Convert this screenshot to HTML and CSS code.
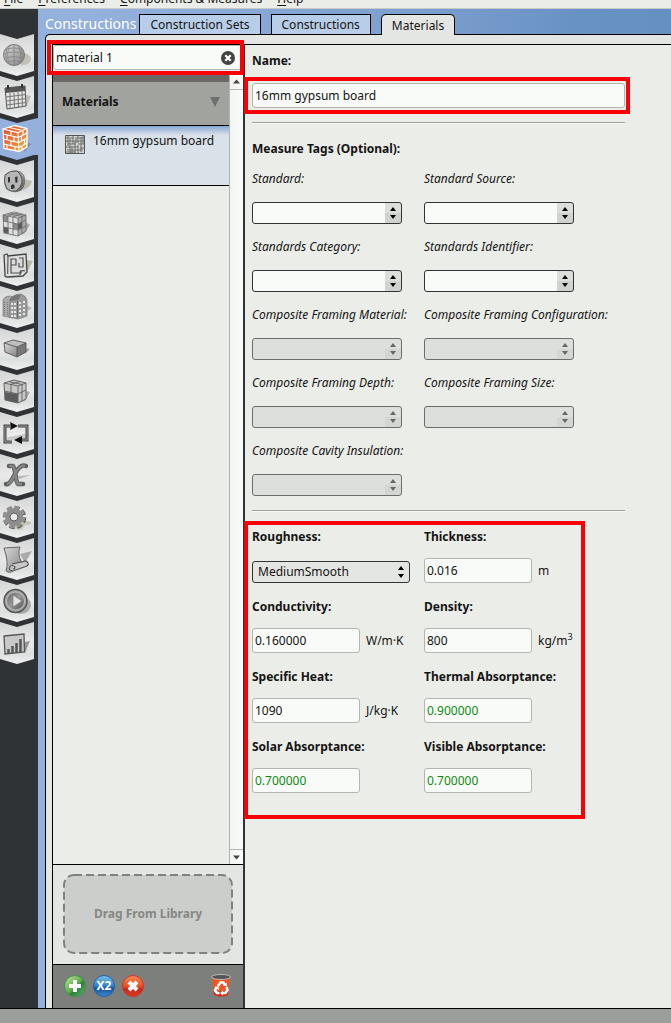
FILE: index.html
```html
<!DOCTYPE html>
<html lang="en">
<head>
<meta charset="utf-8">
<title>Constructions - Materials</title>
<link rel="stylesheet" href="styles.css">
</head>
<body>
<svg class="defs" aria-hidden="true">
  <defs>
    <linearGradient id="plate" x1="0" y1="0" x2="0" y2="1"><stop offset="0" stop-color="#d4d6d5"/><stop offset=".5" stop-color="#e8e9e8"/><stop offset=".75" stop-color="#dcdfdf"/><stop offset="1" stop-color="#f0f1f0"/></linearGradient>
    <linearGradient id="metal" x1="0" y1="0" x2="1" y2="1"><stop offset="0" stop-color="#d8d8d7"/><stop offset="1" stop-color="#858585"/></linearGradient>
    <linearGradient id="dark" x1="0" y1="0" x2="1" y2="1"><stop offset="0" stop-color="#666"/><stop offset=".5" stop-color="#999"/><stop offset="1" stop-color="#4c4c4c"/></linearGradient>
    <linearGradient id="brick" x1="0" y1="0" x2="1" y2="1"><stop offset="0" stop-color="#d9512c"/><stop offset=".55" stop-color="#ee7b39"/><stop offset="1" stop-color="#f8b52c"/></linearGradient>
    <linearGradient id="green" x1="0" y1="0" x2="1" y2="1"><stop offset="0" stop-color="#c9e5a5"/><stop offset=".5" stop-color="#62ad4c"/><stop offset=".6" stop-color="#2e7d3c"/><stop offset="1" stop-color="#5cc46a"/></linearGradient>
    <linearGradient id="blue" x1="0" y1="0" x2="0" y2="1"><stop offset="0" stop-color="#7fc0ea"/><stop offset=".5" stop-color="#2f83c8"/><stop offset=".6" stop-color="#174f95"/><stop offset="1" stop-color="#3d8cd0"/></linearGradient>
    <linearGradient id="red" x1="0" y1="0" x2="0" y2="1"><stop offset="0" stop-color="#f58b58"/><stop offset=".5" stop-color="#ea5225"/><stop offset=".65" stop-color="#c8261c"/><stop offset="1" stop-color="#df3c24"/></linearGradient>
    <path id="tab" d="M0 0 17 5 34 0V37L17 42 0 37Z" fill="url(#plate)"/>
  </defs>
</svg>

<nav class="menubar" aria-label="Menu">
  <button><u>F</u>ile</button>
  <button><u>P</u>references</button>
  <button><u>C</u>omponents &amp; Measures</button>
  <button><u>H</u>elp</button>
</nav>

<div class="workspace">
  <nav class="rail" aria-label="Sections">
    <button aria-label="Site"><svg viewBox="0 0 38 42"><use href="#tab"/><ellipse cx="23" cy="25" rx="8" ry="6" fill="#c3c1b5"/><circle cx="14" cy="21" r="10.5" fill="url(#metal)" stroke="#787878"/><path d="M5 16q9-4 18 0M4 20q10-4 20 0M4 24q10-3 20 0M6 28q8-3 16 0M14 10.500v21M10 11q-5 10 0 20M18 11q5 10 0 20M7 14q-3 7 0 14M21 14q3 7 0 14" fill="none" stroke="#808080" stroke-width=".7"/></svg></button>
    <button aria-label="Schedules"><svg viewBox="0 0 38 42"><use href="#tab"/><path d="m26 19 5 1-4 10-18 3z" fill="#bdbdb7"/><path d="M5 12 25 10 26 30 7 33Z" fill="#e3e3e2" stroke="#555"/><path d="m5 12 20-2 .3 5L5.300 17z" fill="#555"/><path d="M8 9v4M22 8v4" stroke="#333" stroke-width="2"/><path d="M6 21 25.500 18.500M6.500 25 26 22.500M6.500 29 26 26.500M10 17v15.500M14 16.500 14.500 32M18 16 18.500 31.500M22 15.500 22.500 31" stroke="#777"/></svg></button>
    <button aria-label="Constructions" aria-current="page"><svg viewBox="0 0 38 42"><path d="M0 0 17 5 38 0V37L34 37 17 42 0 37Z" fill="#94b0dc"/><path d="m26 24 5 2-7 8z" fill="#6e86ad"/><path d="m3 11 12-3.500 12 3V29l-8 4.500-15-3z" fill="url(#brick)" stroke="#fff" stroke-width="1.300"/><path d="m3 11 15 3.500 9-4M18 14.500 19 33M3.300 16l15 3.500 8.700-4.500M3.600 21l15 3.500 8.400-4.500M4 26l15 3.500 8-4.500M9 9.500l14 3M11 13v5M7 17v5M14 18.500v5M11 23v5M7 27v4M15 29v4M23 12v5M21.500 18v5M24.500 21v5M22 27.500v4" fill="none" stroke="#fff" stroke-width="1.200"/></svg></button>
    <button aria-label="Loads"><svg viewBox="0 0 38 42"><use href="#tab"/><path d="m24 19 8 2q-1 8-15 11z" fill="#bdbab0"/><path d="M6 14q5-5 14-3 6 3 5 12-1 7-8 9-6 1-11-3-4-8 0-15Z" fill="url(#dark)"/><path d="M5 15q5-5 12-4 5 4 5 11-1 6-6 9-5 1-9-2-4-7-2-14Z" fill="#b6b6b5" stroke="#555"/><path d="m8 17 2 .3v5l-2 .2zM15 17l2.500-.5v6l-2 .3z" fill="#333"/><path d="M11 29v-3q1.500-3 3.500-.5v3z" fill="#333"/></svg></button>
    <button aria-label="Space Types"><svg viewBox="0 0 38 42"><use href="#tab"/><path d="m26 20 4 3-6 9-6 1z" fill="#aaa"/><path d="m3 13 11-3 12 3v16l-8 5-14-3z" fill="#dedede"/><path d="m3 13 5 1v6l-5-1zM13 21l5 1v5.500l-5-1z" fill="#8b8b8b"/><path d="m18 16 8-3v16l-8 5z" fill="#a9a9a9"/><path d="m18 22 4-2v5.500L18 28zM3.500 25l5 1v5.500l-5-1z" fill="#5b5b5b"/><path d="m3 13 11-3 12 3v16l-8 5-14-3zM3 13l15 3 8-3M18 16v18M3 19l15 3 8-4M3.500 25l14.500 3 8-4M8 14v17.500M13 15v18M22 14.500V31.500M7 12l15 2.500M10 11l14 2.500M8 14l10-3M13 15l9-3" fill="none" stroke="#666" stroke-width=".8"/></svg></button>
    <button aria-label="Geometry"><svg viewBox="0 0 38 42"><use href="#tab"/><path d="m27 16 6 1-5 9-5 5z" fill="#bbb8aa"/><path d="m4 11 3-1 1 2 18-2 1 18-4 4-15 1q-4 0-3-3z" fill="#dcdddb" stroke="#444" stroke-width="1.300"/><path d="m8 12-.3 18" stroke="#444"/><path d="M16 15h-5v14h10v-3M16 15v6h-5M19 14h4v9h-4v-4M20 31v-3q2-2 5-1" fill="none" stroke="#505050" stroke-width="1.200"/></svg></button>
    <button aria-label="Facility"><svg viewBox="0 0 38 42"><use href="#tab"/><path d="m26 19 6 3-7 5z" fill="#b9b9b7"/><path d="M3 15q0-5 8-5l2 2v20l-10-2z" fill="#aaa" stroke="#777" stroke-width=".7"/><path d="M10 13q4-5 11-5 5 2 6 6v16l-9 3-9-2z" fill="#999" stroke="#777" stroke-width=".7"/><path d="M10 13q4-5 11-4l-3 5-8 1z" fill="#777"/><path d="M12 17v14M15 17v15M20 16v15M24 15v15" stroke="#f0f0f0" stroke-width="1.800" stroke-dasharray="2 2"/><path d="M4.500 16v13M7.500 16v14" stroke="#777" stroke-dasharray="1 1"/><path d="M17.500 15v17" stroke="#666"/></svg></button>
    <button aria-label="Spaces"><svg viewBox="0 0 38 42"><use href="#tab"/><path d="m25 20 5 1-5 5z" fill="#a8a8a8"/><path d="m4 15 9-3 13 3-9 4z" fill="#bfbfbf"/><path d="m4 15 13 4v10L5 24z" fill="url(#metal)"/><path d="m17 19 9-4v9l-9 5z" fill="#787878"/><path d="m4 15 9-3 13 3v9l-9 5-12-5zM4 15l13 4v10M17 19l9-4" fill="none" stroke="#555" stroke-width=".9"/></svg></button>
    <button aria-label="Thermal Zones"><svg viewBox="0 0 38 42"><use href="#tab"/><path d="m26 21 4 1-5 9-6 1z" fill="#aaa"/><path d="m4 13 10-3 12 3v16l-8 4-13-3z" fill="#c8c8c7" stroke="#666"/><path d="m5 22 13 2v9L5 30z" fill="#5c5c5c"/><path d="m4 13 14 3 8-3M18 16v17M11 14.500v17M4.500 21l13.500 3 8-4M22 14v17M9 11.500l13 3M10 14.500l10-3" fill="none" stroke="#606060" stroke-width=".9"/></svg></button>
    <button aria-label="HVAC Systems"><svg viewBox="0 0 38 42"><use href="#tab"/><path d="M7 28q0-7 23-6l-4 5z" fill="#c8c8c6"/><path d="m8 24 16-3" stroke="#eee" stroke-width="2"/><path d="M11 14H5v16h7M18 14h9v14h-7" fill="none" stroke="#454545" stroke-width="3"/><path d="M11 14H5v16h7M18 14h9v14h-7" fill="none" stroke="#999"/><path d="m10 10 8 4-8 4 1-4zM22 24v8l-8-4z" fill="#111"/></svg></button>
    <button aria-label="Output Variables"><svg viewBox="0 0 38 42"><use href="#tab"/><path d="m18 22 13-1-12 4z" fill="#b8b8b6"/><path d="M9 12h4c3 3 2 15 5 18h5M26 12c-5-2-8 2-11 8s-6 11-9 10" fill="none" stroke="#5c5c5c" stroke-width="4.500" stroke-linecap="round" stroke-linejoin="round"/><path d="M9 12h4c3 3 2 15 5 18h4M25 12c-4-1-7 2-10 8s-5 10-8 10" fill="none" stroke="#858585" stroke-width="2.500"/></svg></button>
    <button aria-label="Simulation Settings"><svg viewBox="0 0 38 42"><use href="#tab"/><path d="m22 24 9 2q1 3-6 3l-4 5-10-2z" fill="#c3c0b4"/><circle cx="14.500" cy="21.500" r="9.500" fill="none" stroke="#555" stroke-width="4.500" stroke-dasharray="4.600 2.860"/><circle cx="14" cy="21" r="9.500" fill="none" stroke="#929292" stroke-width="3.500" stroke-dasharray="4.600 2.860"/><circle cx="14" cy="21" r="6.500" fill="none" stroke="#8e8e8e" stroke-width="5"/><circle cx="14" cy="21" r="4" fill="#e9e9e8" stroke="#5c5c5c"/></svg></button>
    <button aria-label="Measures"><svg viewBox="0 0 38 42"><use href="#tab"/><path d="m20 16 12-3-7 12z" fill="#aaa"/><path d="m4 10 16-1q-3 7 2 16l-8 7q-4 4-8 1Q9 25 4 10Z" fill="url(#metal)" stroke="#666"/><path d="m12 26 14-3q4 3 1 5l-14 5q-5-1-3-4 2-3 5 0 0 2-2 2" fill="#c9c9c9" stroke="#555" stroke-width="1.200"/></svg></button>
    <button aria-label="Run Simulation"><svg viewBox="0 0 38 42"><use href="#tab"/><ellipse cx="21" cy="25" rx="10" ry="9" fill="#aaa"/><circle cx="15.500" cy="21" r="11.500" fill="#a1a1a1" stroke="#555" stroke-width="1.500"/><circle cx="15.500" cy="21" r="9" fill="url(#dark)" stroke="#bcbcbc"/><path d="m13 15 9 6-9 6z" fill="#e3e3e3" stroke="#777" stroke-width=".7"/></svg></button>
    <button aria-label="Results Summary"><svg viewBox="0 0 38 42"><use href="#tab"/><path d="m25 20 5-1-5 12z" fill="#999"/><path d="m4 14 20-2 .5 18L5 32z" fill="#c9c9c9" stroke="#555" stroke-width="1.300"/><path d="M8.500 31v-4M12.500 31v-7M16.500 30.500V21M20.500 30V17" stroke="#555" stroke-width="2.500"/></svg></button>
  </nav>

  <main class="main">
    <header class="tabbar">
      <h1>Constructions</h1>
      <button class="tab">Construction Sets</button>
      <button class="tab">Constructions</button>
      <button class="tab tab-active">Materials</button>
    </header>

    <div class="frame">
      <div class="panes">
        <aside class="library">
          <div class="search marked">
            <input type="text" value="material 1" aria-label="Search materials">
            <button aria-label="Clear search"><svg viewBox="0 0 14 14"><circle cx="7" cy="7" r="7" fill="#444"/><path d="m4.300 4.300 5.400 5.400M9.700 4.300 4.300 9.700" stroke="#fff" stroke-width="2.200"/></svg></button>
          </div>
          <div class="list">
            <div class="list-body">
              <button class="group">Materials <svg viewBox="0 0 10 10"><path d="M0 0h10L5 10z" fill="#6e706d"/></svg></button>
              <button class="item">
                <svg viewBox="0 0 20 20"><path d="M.5.500h19v18H.500z" fill="#d2d4d2" stroke="#555"/><path d="M1 3h8M12 3h7M1 6h18M3 9h8M13 9h6M1 12h12M15 13h4M2 15h16M1 17h10M3 1v10M5 4v14M8 1v8M10 6v12M13 1v7M13 10v8M16 2v15M18 1v8M7 11v7M11 2v6" stroke="#6d706d" stroke-width="1"/></svg>
                <span>16mm gypsum board</span>
              </button>
            </div>
            <div class="scroll" aria-hidden="true">
              <svg viewBox="0 0 13 14"><path d="M3 8.500 6.500 4.500 10 8.500z" fill="#444"/></svg>
              <svg viewBox="0 0 13 14"><path d="M3 5.500 6.500 9.500 10 5.500z" fill="#444"/></svg>
            </div>
          </div>
          <div class="drop"><div class="drop-box"><svg><rect/></svg><span>Drag From Library</span></div></div>
          <div class="actions">
            <button aria-label="Add"><svg viewBox="0 0 22 22"><circle cx="11" cy="11" r="10.500" fill="url(#green)" stroke="#3e9546"/><path d="M11 5v12M5 11h12" stroke="#fff" stroke-width="4"/></svg></button>
            <button aria-label="Duplicate"><svg viewBox="0 0 22 22"><circle cx="11" cy="11" r="10.500" fill="url(#blue)" stroke="#2261a8"/><text x="11" y="15" text-anchor="middle">X2</text></svg></button>
            <button aria-label="Remove"><svg viewBox="0 0 22 22"><circle cx="11" cy="11" r="10.500" fill="url(#red)" stroke="#c73a22"/><path d="m7 7 8 8M15 7l-8 8" stroke="#fff" stroke-width="4"/></svg></button>
            <button class="purge" aria-label="Purge unused"><svg viewBox="0 0 22 24"><path d="M2 3h18l-2 18q-7 3-14 0z" fill="#ef5423"/><path d="M3.500 17h15l-.5 4q-7 3-14 0z" fill="#c7301d"/><ellipse cx="11" cy="3" rx="9.500" ry="2.500" fill="#555" stroke="#bbb"/><path d="m8 12 2.500-3.500h3L15 11M16.500 13l1 3-2 3H12M9.500 19H7l-2-2.500L6.500 13" fill="none" stroke="#fff" stroke-width="2.500"/><path d="m16.500 8.500.5 4-4-1zM13 16.500v5L10 19zM4.500 13l4-1 .5 4z" fill="#fff"/></svg></button>
          </div>
        </aside>

        <form class="editor">
          <label class="strong" for="name">Name:</label>
          <div class="name marked"><input id="name" type="text" value="16mm gypsum board"></div>
          <hr>
          <h2 class="strong">Measure Tags (Optional):</h2>
          <div class="grid tags">
            <div class="field"><label for="t1">Standard:</label><select id="t1"><option></option></select></div>
            <div class="field"><label for="t2">Standard Source:</label><select id="t2"><option></option></select></div>
            <div class="field"><label for="t3">Standards Category:</label><select id="t3"><option></option></select></div>
            <div class="field"><label for="t4">Standards Identifier:</label><select id="t4"><option></option></select></div>
            <div class="field"><label for="t5">Composite Framing Material:</label><select id="t5" disabled><option></option></select></div>
            <div class="field"><label for="t6">Composite Framing Configuration:</label><select id="t6" disabled><option></option></select></div>
            <div class="field"><label for="t7">Composite Framing Depth:</label><select id="t7" disabled><option></option></select></div>
            <div class="field"><label for="t8">Composite Framing Size:</label><select id="t8" disabled><option></option></select></div>
            <div class="field"><label for="t9">Composite Cavity Insulation:</label><select id="t9" disabled><option></option></select></div>
          </div>
          <hr>
          <div class="grid props marked">
            <div class="field"><label for="p1">Roughness:</label><select id="p1" class="filled"><option>MediumSmooth</option></select></div>
            <div class="field"><label for="p2">Thickness:</label><div class="value"><input id="p2" type="text" value="0.016"><span>m</span></div></div>
            <div class="field"><label for="p3">Conductivity:</label><div class="value"><input id="p3" type="text" value="0.160000"><span>W/m·K</span></div></div>
            <div class="field"><label for="p4">Density:</label><div class="value"><input id="p4" type="text" value="800"><span>kg/m<sup>3</sup></span></div></div>
            <div class="field"><label for="p5">Specific Heat:</label><div class="value"><input id="p5" type="text" value="1090"><span>J/kg·K</span></div></div>
            <div class="field"><label for="p6">Thermal Absorptance:</label><div class="value"><input id="p6" class="default" type="text" value="0.900000"></div></div>
            <div class="field"><label for="p7">Solar Absorptance:</label><div class="value"><input id="p7" class="default" type="text" value="0.700000"></div></div>
            <div class="field"><label for="p8">Visible Absorptance:</label><div class="value"><input id="p8" class="default" type="text" value="0.700000"></div></div>
          </div>
        </form>
      </div>
    </div>
  </main>
</div>
<footer class="statusbar"></footer>
</body>
</html>
```
FILE: styles.css
```css
*, *::after { box-sizing: border-box; }

body {
  margin: 0;
  min-height: 100vh;
  display: flex;
  flex-direction: column;
  background: #ebede8;
  color: #141414;
  font: 12px/18px "Noto Sans", sans-serif;
}

button, input, select { font: inherit; color: inherit; }
button { padding: 0; border: 0; background: none; }
svg { display: block; }
.defs { position: absolute; width: 0; height: 0; }

.menubar {
  display: flex;
  align-items: flex-end;
  gap: 15px;
  height: 9px;
  padding-left: 4px;
  overflow: hidden;
  border-bottom: 1px solid #c8cac7;
}
.menubar button { flex: none; height: 18px; line-height: 18px; }
.menubar u { text-underline-offset: 2px; }

.workspace { flex: 1; display: flex; }

.rail {
  flex: none;
  width: 38px;
  padding-top: 25px;
  background: #2f3336;
}
.rail button { display: block; width: 100%; }
.rail svg { width: 100%; overflow: visible; }

.main {
  flex: 1;
  min-width: 0;
  display: flex;
  flex-direction: column;
  padding-left: 7px;
  background: linear-gradient(90deg, #94b0dc 0, #94b0dc 60px, #7b9fcf 60%, #6992c4 85%, #6790c2);
}

.tabbar { display: flex; align-items: flex-end; height: 25px; }
.tabbar h1 {
  margin: 0 3px 0 0;
  color: #fff;
  font-size: 14px;
  font-weight: 400;
  line-height: 20px;
}
.tab {
  height: 20px;
  margin-right: 10px;
  padding: 0 10px;
  border: 1px solid #000;
  border-bottom: 0;
  background: #b8cee8;
  font-size: 12px;
  line-height: 20px;
}
.tab-active {
  z-index: 1;
  height: 21px;
  margin-bottom: -1px;
  border-radius: 5px 5px 0 0;
  background: #e4e6e3;
  line-height: 22px;
}

.frame {
  flex: 1;
  display: flex;
  padding: 9px 0 0 6px;
  border: solid #000;
  border-width: 1px 0 0 1px;
  border-radius: 5px 0 0 0;
  background: #e4e6e3;
}
.panes {
  flex: 1;
  min-width: 0;
  display: flex;
  border: solid #000;
  border-width: 1px 0 0 1px;
  background: #ebede8;
}

.marked { position: relative; }
.marked::after {
  content: "";
  position: absolute;
  border: 4px solid #fb0007;
  pointer-events: none;
}

.library {
  flex: none;
  display: flex;
  flex-direction: column;
  width: 192px;
  border-right: 2px solid #2f3336;
}
.search { display: flex; align-items: center; height: 30px; padding-bottom: 5px; }
.search::after { inset: -5px -1px 0 -6px; }
.search input {
  width: 100%;
  height: 25px;
  padding: 0 24px 0 2px;
  border: 1px solid #b4b6b3;
  border-radius: 3px;
  background: #f9fbf8;
}
.search button { width: 14px; margin-left: -22px; }

.list { flex: 1; display: flex; }
.list-body { flex: 1; border-top: 7px solid #6b6766; }
.group {
  display: flex;
  align-items: center;
  justify-content: space-between;
  width: 100%;
  height: 44px;
  padding: 0 9px;
  padding-bottom: 4px;
  border-bottom: 1px solid #000;
  background: #a1a39f;
  font-weight: 700;
}
.group svg { width: 10px; }
.item {
  display: flex;
  align-items: flex-start;
  gap: 8px;
  width: 100%;
  height: 60px;
  padding: 6px 12px;
  border-bottom: 1px solid #000;
  background: linear-gradient(#87a6d3, #d9e1e9 9px);
}
.item svg { width: 20px; margin-top: 3px; }
.scroll {
  display: flex;
  flex-direction: column;
  justify-content: space-between;
  width: 14px;
  border-left: 1px solid #b4b6b3;
  background: linear-gradient(90deg, #f3f5f2, #fbfcfa);
}
.scroll svg:first-child { border-bottom: 1px solid #b4b6b3; }
.scroll svg:last-child { border-top: 1px solid #b4b6b3; }

.drop { padding: 9px 10px 10px; border: solid #000; border-width: 1px 0; background: #e4e6e3; }
.drop-box {
  display: grid;
  place-items: center;
  height: 80px;
  color: #858785;
  font-weight: 700;
}
.drop-box > * { grid-area: 1 / 1; }
.drop-box svg { width: 100%; height: 100%; }
.drop-box rect {
  x: 1px;
  y: 1px;
  width: calc(100% - 2px);
  height: calc(100% - 2px);
  rx: 10px;
  fill: #cccecb;
  stroke: #7f817e;
  stroke-width: 2px;
  stroke-dasharray: 8 4;
}
.actions {
  display: flex;
  align-items: center;
  gap: 7px;
  height: 43px;
  padding: 0 11px 1px;
  background: #7d7f7c;
}
.actions svg { width: 22px; }
.actions text { fill: #fff; font-size: 12px; font-weight: 700; }
.purge { margin-left: auto; }

.editor { flex: 1; min-width: 0; padding: 7px 46px 0 7px; }
.strong { display: block; margin: 0; font-size: 12px; font-weight: 700; line-height: 18px; }
.name { margin-top: 13px; }
.name::after { inset: -6px -5px -6px -8px; }
.editor input {
  width: 108px;
  height: 25px;
  padding: 0 2px;
  border: 1px solid #b4b6b3;
  border-radius: 3px;
  background: #f9fbf8;
}
.name input { display: block; width: 100%; }
.editor hr {
  height: 2px;
  margin: 14px 0 16px;
  border: 0;
  border-top: 1px solid #9c9e9b;
  background: #fafbf9;
}

.grid { display: grid; grid-template-columns: 172px auto; justify-content: start; }
.field { display: flex; flex-direction: column; align-items: flex-start; white-space: nowrap; }
.tags { margin-top: 12px; row-gap: 14px; }
.tags label { font-style: italic; }
.tags .field { height: 54px; justify-content: space-between; }

select {
  appearance: none;
  width: 150px;
  height: 22px;
  padding: 0 5px;
  border: 1px solid #2f3336;
  border-radius: 3px;
  background:
    url("data:image/svg+xml,%3Csvg xmlns='http://www.w3.org/2000/svg' viewBox='0 0 6 12'%3E%3Cpath d='M0 4 3 0 6 4zM0 8h6L3 12z'/%3E%3C/svg%3E") right 5px center / 6px 12px no-repeat,
    linear-gradient(#dcdedb 50%, #d0d2cf 50%) right / 16px 100% no-repeat,
    #f9fbf8;
}
select:disabled {
  opacity: 1;
  border-color: #6b6d6a;
  background:
    url("data:image/svg+xml,%3Csvg xmlns='http://www.w3.org/2000/svg' viewBox='0 0 6 12'%3E%3Cpath fill='%23666' d='M0 4 3 0 6 4zM0 8h6L3 12z'/%3E%3C/svg%3E") right 5px center / 6px 12px no-repeat,
    linear-gradient(#dddfdc 50%, #d4d6d3 50%) right / 16px 100% no-repeat,
    #dddfdc;
}
select.filled {
  width: 158px;
  line-height: 20px;
  background-color: #e4e6e3;
  background-size: 6px 12px, 0 0;
}

.props { row-gap: 15px; }
.props::after { inset: -7px auto -26px -8px; width: 341px; }
.props .field { height: 55px; justify-content: space-between; }
.props label { font-weight: 700; }
.value { display: flex; align-items: center; gap: 6px; }
.value sup { font-size: 9px; line-height: 0; }
.default { color: #108a10; }

.statusbar { height: 15px; border-top: 1px solid #000; background: #9c9e9b; }
```
